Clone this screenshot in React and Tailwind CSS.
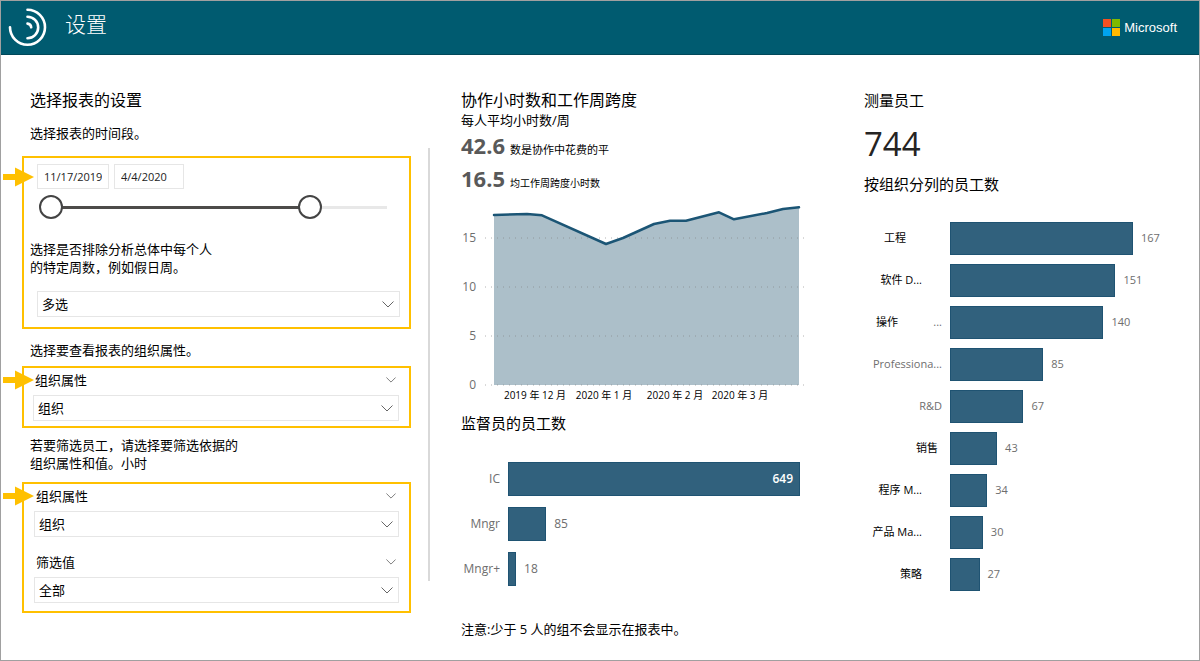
import { useState } from 'react'

const trend = [
  [33, 18], [66, 17], [81, 18.3], [145, 47], [162, 41], [193, 27], [209, 23.7],
  [225, 23.7], [258, 15.3], [273, 22.3], [306, 16], [322, 12], [338, 10.3],
]

const yTicks = [
  { label: '15', y: 41 },
  { label: '10', y: 90 },
  { label: '5',  y: 139 },
  { label: '0',  y: 188 },
]

const xTicks = [
  { label: '2019 年 12 月', x: 74 },
  { label: '2020 年 1 月',  x: 143 },
  { label: '2020 年 2 月',  x: 214 },
  { label: '2020 年 3 月',  x: 279 },
]

const supervisors = [
  { label: 'IC',    value: 649 },
  { label: 'Mngr',  value: 85 },
  { label: 'Mngr+', value: 18 },
]

const organizations = [
  { label: '工程',           value: 167, style: 'justify-end pr-9 text-black' },
  { label: '软件 D...',      value: 151, style: 'justify-end pr-5 text-black' },
  { label: '操作',           value: 140, style: 'justify-between text-black', more: true },
  { label: 'Professiona...', value: 85,  style: 'justify-end text-[#6e6e6e]' },
  { label: 'R&D',            value: 67,  style: 'justify-end text-[#6e6e6e]' },
  { label: '销售',           value: 43,  style: 'justify-end pr-1 text-black' },
  { label: '程序 M...',      value: 34,  style: 'justify-end pr-5 text-black' },
  { label: '产品 Ma...',     value: 30,  style: 'justify-end pr-5 text-black' },
  { label: '策略',           value: 27,  style: 'justify-end pr-5 text-black' },
]

function Chevron({ className }) {
  return (
    <svg className={className} viewBox="0 0 12 7" fill="none" stroke="#666666" strokeWidth="1">
      <path d="M0.5 0.5L6 6L11.5 0.5" />
    </svg>
  )
}

// Caixa amarela com a seta à esquerda
function Highlight({ arrow, className, children }) {
  return (
    <div className={`relative border-2 border-[#ffc000] ${className}`}>
      <svg className={`absolute -left-[22px] w-8 h-5 ${arrow}`} viewBox="0 0 32 20" fill="#ffc000">
        <path d="M1 7H13V0.5L32 10L13 19.5V13H1Z" />
      </svg>
      {children}
    </div>
  )
}

function Dropdown({ label, value }) {
  return (
    <div className="relative">
      <select
        aria-label={label}
        className="block w-full h-[26px] appearance-none border border-[#e6e6e6] bg-white px-1 text-[13px] leading-[18px] text-black"
      >
        <option>{value}</option>
      </select>
      <Chevron className="absolute right-[6px] top-[10px] w-3 h-[7px] pointer-events-none" />
    </div>
  )
}

function Field({ title, value }) {
  return (
    <div className="flex flex-col gap-[6px]">
      <button type="button" className="flex items-center justify-between pl-[2px] pr-[3px] text-[13px] leading-[18px]">
        {title}
        <Chevron className="w-[10px] h-[6px]" />
      </button>
      <Dropdown label={title} value={value} />
    </div>
  )
}

const rangeStyle =
  'col-start-1 row-start-1 w-full h-6 m-0 appearance-none bg-transparent pointer-events-none ' +
  '[&::-webkit-slider-thumb]:appearance-none [&::-webkit-slider-thumb]:pointer-events-auto ' +
  '[&::-webkit-slider-thumb]:w-6 [&::-webkit-slider-thumb]:h-6 [&::-webkit-slider-thumb]:rounded-full ' +
  '[&::-webkit-slider-thumb]:border-2 [&::-webkit-slider-thumb]:border-[#444444] [&::-webkit-slider-thumb]:bg-white'

function PeriodSlider() {
  const [from, setFrom] = useState(0)
  const [to,   setTo]   = useState(80)

  return (
    <div className="relative grid w-[348px] max-w-full">
      <div className="absolute left-3 right-0 top-[11px] h-[3px] bg-[#e8e8e8]">
        <div className="h-full bg-[#4d4b49]" style={{ marginLeft: `${from * 0.97}%`, width: `${(to - from) * 0.97}%` }} />
      </div>
      <input type="range" aria-label="开始日期" className={`relative ${rangeStyle}`} value={from}
        onChange={e => setFrom(Math.min(Number(e.target.value), to))} />
      <input type="range" aria-label="结束日期" className={`relative ${rangeStyle}`} value={to}
        onChange={e => setTo(Math.max(Number(e.target.value), from))} />
    </div>
  )
}

function TrendChart() {
  const line = trend.map(p => p.join(',')).join(' ')

  return (
    <svg className="block w-full" viewBox="0 0 350 210" role="img" aria-label="协作小时数和工作周跨度">
      <polygon points={`33,188 ${line} 338,188`} fill="#acbfc9" />
      {yTicks.map(t => (
        <g key={t.label}>
          <line x1="24" x2="348" y1={t.y} y2={t.y} stroke="#808080" strokeOpacity="0.6" strokeWidth="1" strokeDasharray="1 5" />
          <text x="15" y={t.y + 4} textAnchor="end" fontSize="12" fill="#6e6e6e">{t.label}</text>
        </g>
      ))}
      <polyline points={line} fill="none" stroke="#1b5575" strokeWidth="2.5" strokeLinejoin="round" strokeLinecap="round" />
      {xTicks.map(t => (
        <text key={t.label} x={t.x} y="202" textAnchor="middle" fontSize="10" fill="#000000">{t.label}</text>
      ))}
    </svg>
  )
}

export default function App() {
  return (
    <div className="min-h-screen border border-[#a0a0a0] bg-white text-black font-['Open_Sans','Noto_Sans_CJK_SC',sans-serif]">

      {/* Cabeçalho */}
      <header className="flex h-[54px] items-center justify-between border-b border-[#00485a] bg-[#005b70] pl-[7px] pr-[22px] text-white">
        <div className="flex items-start gap-[18px]">
          <svg className="w-[39px] h-[39px]" viewBox="0 0 39 39" fill="none" stroke="#ffffff" strokeWidth="2.6" strokeLinecap="round">
            <path d="M19.5 1.8A17.5 17.5 0 1 1 2 19.3" />
            <path d="M19.5 8.8A10.7 10.7 0 0 1 19.5 30.2" />
            <path d="M19.5 15.6A4 4 0 0 1 23.2 19.3" />
          </svg>
          <h1 className="text-[21px] leading-8 font-light">设置</h1>
        </div>
        <div className="flex items-center gap-1">
          <div className="grid grid-cols-2 gap-px">
            <span className="w-2 h-2 bg-[#f25022]" />
            <span className="w-2 h-2 bg-[#7fba00]" />
            <span className="w-2 h-2 bg-[#00a4ef]" />
            <span className="w-2 h-2 bg-[#ffb900]" />
          </div>
          <span className="font-['Liberation_Sans',sans-serif] text-[13px]">Microsoft</span>
        </div>
      </header>

      <main className="grid grid-cols-[389fr_50px_403fr_335fr] pl-[21px] pt-[34px]">

        {/* Configurações */}
        <section>
          <div className="pl-2">
            <h2 className="text-base leading-[22px]">选择报表的设置</h2>
            <p className="mt-[13px] text-[13px] leading-[18px]">选择报表的时间段。</p>
          </div>

          <Highlight arrow="top-[9px]" className="mt-[14px] pl-[13px] pr-[9px] pt-[6px] pb-[10px]">
            <div className="flex gap-[5px]">
              <input aria-label="开始日期" defaultValue="11/17/2019" className="w-[72px] h-[25px] border border-[#e6e6e6] px-[6px] text-[11px] text-[#222222]" />
              <input aria-label="结束日期" defaultValue="4/4/2020" className="w-[70px] h-[25px] border border-[#e6e6e6] px-[6px] text-[11px] text-[#222222]" />
            </div>
            <div className="mt-[6px] pl-[2px]">
              <PeriodSlider />
            </div>
            <p className="mt-[21px] -ml-[7px] text-[13px] leading-[18px]">
              选择是否排除分析总体中每个人<br />的特定周数，例如假日周。
            </p>
            <div className="mt-[15px]">
              <Dropdown label="排除的周" value="多选" />
            </div>
          </Highlight>

          <p className="mt-3 pl-2 text-[13px] leading-[18px]">选择要查看报表的组织属性。</p>
          <Highlight arrow="top-[2px]" className="mt-[7px] pl-[9px] pr-[10px] pt-[3px] pb-[5px]">
            <Field title="组织属性" value="组织" />
          </Highlight>

          <p className="mt-2 pl-2 text-[13px] leading-[18px]">
            若要筛选员工，请选择要筛选依据的<br />组织属性和值。小时
          </p>
          <Highlight arrow="top-[2px]" className="mt-[10px] flex flex-col gap-4 pl-[10px] pr-[10px] pt-[3px] pb-2">
            <Field title="组织属性" value="组织" />
            <Field title="筛选值" value="全部" />
          </Highlight>
        </section>

        {/* Divisória */}
        <div className="mt-[59px] mb-[57px] ml-[17px] w-[2px] bg-[#d9d9d9]" />

        {/* Colaboração */}
        <section className="pr-[53px]">
          <h2 className="text-base leading-[22px]">协作小时数和工作周跨度</h2>
          <p className="text-[13px] leading-[18px]">每人平均小时数/周</p>
          <p className="flex h-[33px] items-baseline gap-[5px] text-[11px] leading-[33px]">
            <strong className="text-[22px] text-[#595959]">42.6</strong>
            数是协作中花费的平
          </p>
          <p className="flex h-[33px] items-baseline gap-[5px] text-[10px] leading-[33px]">
            <strong className="text-[22px] text-[#595959]">16.5</strong>
            均工作周跨度小时数
          </p>
          <div className="pt-[2px]">
            <TrendChart />
          </div>

          <h2 className="mt-[5px] text-[15px] leading-[22px]">监督员的员工数</h2>
          <ul className="mt-7 flex flex-col gap-[11px] pr-[11px] text-xs text-[#6e6e6e]">
            {supervisors.map((s, i) => (
              <li key={s.label} className="grid grid-cols-[39px_1fr] items-center gap-2">
                <span className="text-right">{s.label}</span>
                <div className="flex items-center gap-2">
                  <div
                    className="flex h-[34px] shrink-0 items-center justify-end border border-[#1f5372] bg-[#31617d]"
                    style={{ width: `${(s.value / 649) * 100}%` }}
                  >
                    {i === 0 && <span className="pr-[6px] font-semibold text-white">{s.value}</span>}
                  </div>
                  {i > 0 && <span>{s.value}</span>}
                </div>
              </li>
            ))}
          </ul>
          <p className="mt-[34px] text-[13px] leading-[18px]">注意:少于 5 人的组不会显示在报表中。</p>
        </section>

        {/* Funcionários */}
        <section>
          <h2 className="text-[15px] leading-[22px]">测量员工</h2>
          <p className="mt-[15px] text-[33px] leading-9 text-[#252423]">744</p>
          <h2 className="mt-[11px] text-[15px] leading-[22px]">按组织分列的员工数</h2>
          <ul className="mt-[27px] flex flex-col gap-[9px] pl-3 pr-[66px] text-[11px]">
            {organizations.map(o => (
              <li key={o.label} className="grid grid-cols-[66px_1fr] items-center gap-2">
                <span className={`flex whitespace-nowrap ${o.style}`}>
                  {o.label}
                  {o.more && <span className="text-[#6e6e6e]">...</span>}
                </span>
                <div className="flex items-center gap-2 text-[#6e6e6e]">
                  <div
                    className="h-[33px] shrink-0 border border-[#1f5372] bg-[#31617d]"
                    style={{ width: `${(o.value / 167) * 100}%` }}
                  />
                  <span>{o.value}</span>
                </div>
              </li>
            ))}
          </ul>
        </section>

      </main>
    </div>
  )
}
